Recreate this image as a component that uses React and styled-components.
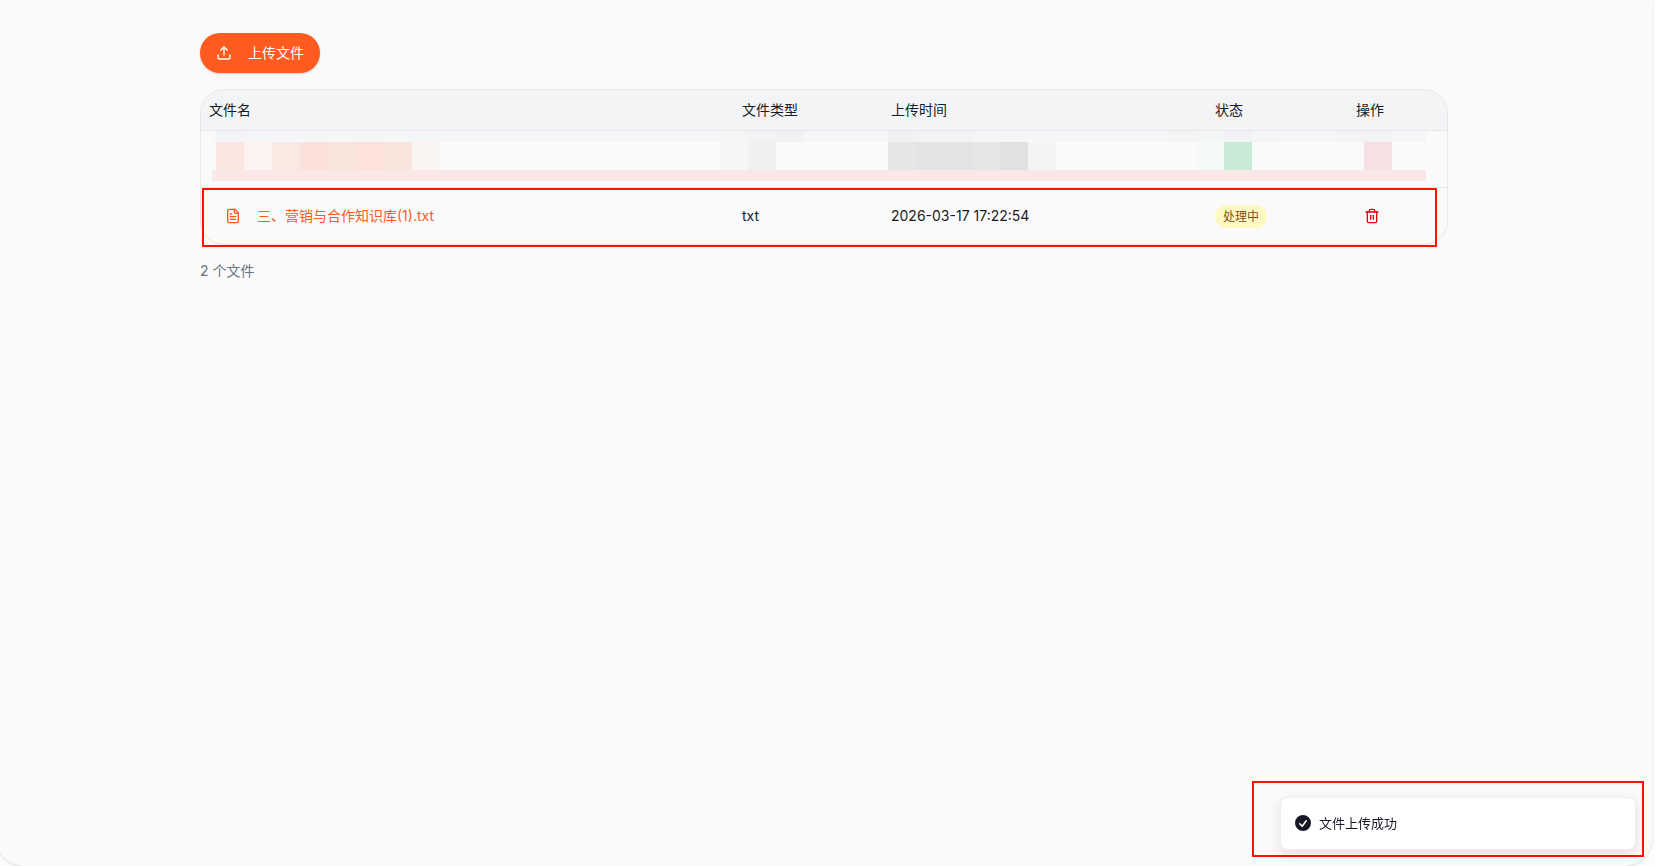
import React from 'react'
import styled, { createGlobalStyle } from 'styled-components';

const TILE = 28;

/* [tile count, colour] runs that cover the hidden row, strip by strip */
const MASK_TOP = [
  [1, '#f2f4f6'],
  [1, '#f3f5f6'],
  [16, '#f4f6f8'],
  [1, '#f5f5f5'],
  [1, '#f2f3f4'],
  [1, '#f0f1f3'],
  [3, '#f4f6f8'],
  [1, '#f0f1f2'],
  [2, '#f2f3f5'],
  [1, '#f4f5f6'],
  [6, '#f4f6f8'],
  [1, '#f4f4f5'],
  [1, '#f4f5f5'],
  [1, '#f2f2f4'],
  [1, '#f4f5f7'],
  [2, '#f4f6f8'],
  [1, '#f4f4f7'],
  [1, '#f3f3f6']
];

const MASK_MIDDLE = [
  [1, '#fbe7e0'],
  [1, '#fbf3f0'],
  [1, '#fae9e2'],
  [1, '#fce1da'],
  [1, '#fae5dd'],
  [1, '#fce2db'],
  [1, '#fae5dc'],
  [1, '#faf5f2'],
  [10, '#fafafa'],
  [1, '#f6f6f6'],
  [1, '#f0f0f0'],
  [4, '#fafafa'],
  [1, '#e6e6e6'],
  [1, '#e3e4e5'],
  [1, '#e1e3e4'],
  [1, '#e6e6e6'],
  [1, '#e0e1e2'],
  [1, '#f4f4f4'],
  [5, '#fafafa'],
  [1, '#f6faf7'],
  [1, '#c8ead6'],
  [1, '#f8fbf9'],
  [3, '#fafafa'],
  [1, '#f7e0e3']
];

const FILES = [
  { name: '三、营销与合作知识库(1).txt', type: 'txt', time: '2026-03-17 17:22:54', status: '处理中' }
];

const Mask = ({ runs }) => runs.map(([count, color], index) => (
  <Tile key={`${color}-${index}`} $count={count} $color={color} />
))

const Icon = ({ size = 16, children }) => (
  <svg width={size} height={size} viewBox="0 0 24 24" fill="none" stroke="currentColor" strokeWidth="2" strokeLinecap="round" strokeLinejoin="round" aria-hidden="true">
    {children}
  </svg>
)

const UploadIcon = () => (
  <Icon>
    <path d="M12 3v12" />
    <path d="m17 8-5-5-5 5" />
    <path d="M21 15v4a2 2 0 0 1-2 2H5a2 2 0 0 1-2-2v-4" />
  </Icon>
)

const FileIcon = () => (
  <Icon>
    <path d="M15 2H6a2 2 0 0 0-2 2v16a2 2 0 0 0 2 2h12a2 2 0 0 0 2-2V7Z" />
    <path d="M14 2v4a2 2 0 0 0 2 2h4" />
    <path d="M10 9H8" />
    <path d="M16 13H8" />
    <path d="M16 17H8" />
  </Icon>
)

const TrashIcon = () => (
  <Icon>
    <path d="M3 6h18" />
    <path d="M19 6v14a2 2 0 0 1-2 2H7a2 2 0 0 1-2-2V6" />
    <path d="M8 6V4a2 2 0 0 1 2-2h4a2 2 0 0 1 2 2v2" />
    <path d="M10 11v6" />
    <path d="M14 11v6" />
  </Icon>
)

const SuccessIcon = () => (
  <svg width="20" height="20" viewBox="0 0 20 20" fill="currentColor" aria-hidden="true">
    <path fillRule="evenodd" clipRule="evenodd" d="M10 18a8 8 0 100-16 8 8 0 000 16zm3.857-9.809a.75.75 0 00-1.214-.882l-3.483 4.79-1.88-1.88a.75.75 0 10-1.06 1.061l2.5 2.5a.75.75 0 001.137-.089l4-5.5z" />
  </svg>
)

export default function App() {
  return (
    <>
      <GlobalStyle />
      <Panel>
        <Container>
          <UploadButton type="button">
            <UploadIcon />
            上传文件
          </UploadButton>
          <TableFrame>
            <Card>
              <Table>
                <colgroup>
                  <col />
                  <Col $width={149} />
                  <Col $width={324} />
                  <Col $width={141} />
                  <Col $width={99} />
                </colgroup>
                <thead>
                  <tr>
                    <Th scope="col">文件名</Th>
                    <Th scope="col">文件类型</Th>
                    <Th scope="col">上传时间</Th>
                    <Th scope="col">状态</Th>
                    <Th scope="col">操作</Th>
                  </tr>
                </thead>
                <tbody>
                  <tr>
                    <MaskCell colSpan={5}>
                      <Strip $height={11} $color="#f4f6f8" $edge="#f7f8f9"><Mask runs={MASK_TOP} /></Strip>
                      <Strip $height={28} $color="#fafafa" $edge="#fafafa"><Mask runs={MASK_MIDDLE} /></Strip>
                      <Strip $height={11} $color="#fae8e8" $edge="#fbeaec" />
                    </MaskCell>
                  </tr>
                  {FILES.map((file) => (
                    <tr key={file.name}>
                      <Td>
                        <FileLink href="#file">
                          <FileIcon />
                          {file.name}
                        </FileLink>
                      </Td>
                      <Td>{file.type}</Td>
                      <Td>{file.time}</Td>
                      <Td><Badge>{file.status}</Badge></Td>
                      <Td>
                        <DeleteButton type="button" aria-label="删除"><TrashIcon /></DeleteButton>
                      </Td>
                    </tr>
                  ))}
                </tbody>
              </Table>
            </Card>
            <RowMarker />
          </TableFrame>
          <Count>2 个文件</Count>
        </Container>
      </Panel>
      <ToastMarker>
        <Toast role="status">
          <SuccessIcon />
          文件上传成功
        </Toast>
      </ToastMarker>
    </>
  )
}

const GlobalStyle = createGlobalStyle`
  * {
    box-sizing: border-box;
  }
  body {
    margin: 0;
    background: #fdfdfd;
    color: #171a26;
    font-family: Inter, "Noto Sans CJK SC", sans-serif;
    font-size: 14px;
    line-height: 20px;
  }
`

const Panel = styled.main`
  min-height: 100vh;
  margin: 0 3px 0 -4px;
  padding-top: 33px;
  border-radius: 0 0 28px 28px;
  background: #fafafa;
  box-shadow: 0 1px 3px rgba(0, 0, 0, 0.14);
`;

const Container = styled.div`
  display: flex;
  flex-direction: column;
  align-items: flex-start;
  gap: 16px;
  max-width: 1280px;
  margin: 0 auto;
  padding: 0 16px;
`;

const UploadButton = styled.button`
  display: flex;
  align-items: center;
  gap: 16px;
  height: 40px;
  padding: 0 16px;
  border: none;
  border-radius: 20px;
  background: #ff5a1f;
  box-shadow: 0 1px 2px rgba(0, 0, 0, 0.16);
  color: white;
  font: inherit;
  cursor: pointer;
`;

const TableFrame = styled.div`
  position: relative;
  width: 100%;
`;

const Card = styled.div`
  border: 1px solid #e5e7eb;
  border-radius: 24px;
  overflow: hidden;
`;

const Table = styled.table`
  width: 100%;
  table-layout: fixed;
  border-collapse: separate;
  border-spacing: 0;
`;

const Col = styled.col`
  width: ${(props) => props.$width}px;
`;

const Th = styled.th`
  height: 41px;
  padding: 0 8px;
  border-bottom: 1px solid #e5e7eb;
  background: #f3f4f6;
  font-weight: 400;
  text-align: left;
`;

const Td = styled.td`
  height: 56px;
  padding: 0 8px;
`;

const MaskCell = styled.td`
  height: 57px;
  padding: 0 21px 0 11px;
  border-bottom: 1px solid #e5e7eb;
  vertical-align: top;
`;

const Strip = styled.div`
  display: flex;
  height: ${(props) => props.$height}px;
  border-left: 4px solid ${(props) => props.$edge};
  background: ${(props) => props.$color};
  overflow: hidden;
`;

const Tile = styled.span`
  flex: none;
  width: ${(props) => props.$count * TILE}px;
  background: ${(props) => props.$color};
`;

const FileLink = styled.a`
  display: flex;
  align-items: center;
  gap: 16px;
  padding: 0 16px;
  color: #ff5a1f;
  text-decoration: none;
`;

const Badge = styled.span`
  display: block;
  width: fit-content;
  padding: 4px 8px 3px;
  border-radius: 12px;
  background: #fef9c3;
  color: #854d0e;
  font-size: 12px;
  line-height: 16px;
`;

const DeleteButton = styled.button`
  display: flex;
  padding: 8px;
  border: none;
  background: none;
  color: #e7000b;
  cursor: pointer;
`;

const Count = styled.p`
  margin: 0;
  color: #6b7280;
`;

/* red outlines lie over the page, they take no room */
const RowMarker = styled.div`
  position: absolute;
  right: 11px;
  bottom: -2px;
  left: 2px;
  height: 59px;
  border: 2px solid #ff1100;
  pointer-events: none;
`;

const ToastMarker = styled.div`
  position: fixed;
  right: 11px;
  bottom: 9px;
  padding: 14px 6px 5px 26px;
  border: 2px solid #ff1100;
`;

const Toast = styled.div`
  display: flex;
  align-items: center;
  gap: 6px;
  width: 356px;
  height: 53px;
  padding: 0 12px 2px;
  border: 1px solid #ededed;
  border-radius: 8px;
  background: white;
  box-shadow: 0 4px 12px rgba(0, 0, 0, 0.1);
  font-size: 13px;
`;
